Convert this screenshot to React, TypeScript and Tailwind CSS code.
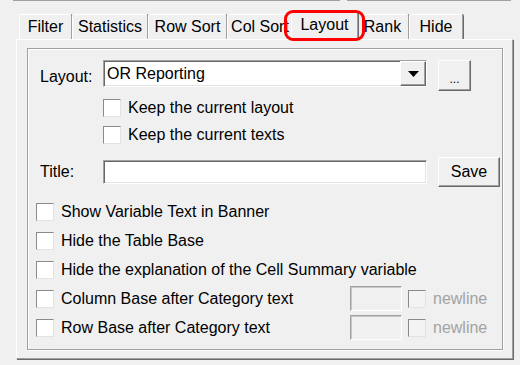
const raised =
  'border border-t-white border-l-white border-r-[#696969] border-b-[#696969] shadow-[inset_-1px_-1px_0_#a0a0a0] bg-[#f0f0f0]';
const sunken =
  'border border-t-[#a0a0a0] border-l-[#a0a0a0] border-r-white border-b-white shadow-[inset_1px_1px_0_#696969,inset_-1px_-1px_0_#e3e3e3]';

function Check({ disabled = false }: { disabled?: boolean }) {
  return (
    <span
      className={
        'block w-[18px] h-[18px] shrink-0 border border-t-[#8a8a8a] border-l-[#8a8a8a] border-r-[#e3e3e3] border-b-[#e3e3e3] ' +
        (disabled ? 'bg-[#f3f3f3]' : 'bg-white')
      }
    />
  );
}

function Tab({ label, width, selected = false }: { label: string; width: string; selected?: boolean }) {
  return (
    <div
      className={
        'flex justify-center bg-[#f0f0f0] rounded-t-[2px] border-l border-t border-white border-r border-r-[#a0a0a0] shadow-[1px_0_0_#696969] ' +
        width +
        (selected ? ' relative z-10 h-[28px] -mx-[2px] pt-[3px]' : ' h-[26px] pt-[3px]')
      }
    >
      <span className="leading-[18px]">{label}</span>
    </div>
  );
}

function OptionRow({ label }: { label: string }) {
  return (
    <div className="flex items-center h-[29px] pl-[8px]">
      <Check />
      <span className="ml-[7px] leading-[18px]">{label}</span>
    </div>
  );
}

function BaseRow({ label }: { label: string }) {
  return (
    <div className="flex items-center h-[29px] pl-[8px]">
      <Check />
      <span className="ml-[7px] w-[289px] leading-[18px]">{label}</span>
      <span className="block w-[52px] h-[25px] bg-[#f0f0f0] border border-t-[#a0a0a0] border-l-[#a0a0a0] border-r-white border-b-white shadow-[inset_1px_1px_0_#c8c8c8]" />
      <span className="ml-[6px]">
        <Check disabled />
      </span>
      <span className="ml-[7px] leading-[18px] text-[#a3a3a3]">newline</span>
    </div>
  );
}

export default function App() {
  return (
    <div className="relative w-[520px] h-[365px] overflow-hidden bg-[#f0f0f0] text-black text-[16px] font-['Liberation_Sans',Arial,sans-serif]">
      {/* bottom edges of the boxes above */}
      <div className="flex h-[1px]">
        <div className="ml-[13px] w-[327px] bg-[#a0a0a0]" />
        <div className="ml-[7px] w-[164px] bg-[#a0a0a0]" />
      </div>

      {/* tabs */}
      <div className="flex items-end mt-[11px] h-[28px] pl-[19px]">
        <Tab label="Filter" width="w-[53px]" />
        <Tab label="Statistics" width="w-[76px]" />
        <Tab label="Row Sort" width="w-[79px]" />
        <Tab label="Col Sort" width="w-[66px]" />
        <Tab label="Layout" width="w-[67px]" selected />
        <Tab label="Rank" width="w-[53px]" />
        <Tab label="Hide" width="w-[54px]" />
      </div>

      {/* tab panel */}
      <div className="relative -mt-[1px] ml-[16px] w-[497px] h-[320px] border-l border-t border-white border-r border-b border-r-[#a0a0a0] border-b-[#a0a0a0] shadow-[1px_1px_0_#696969]">
        <div className="ml-[10px] mt-[8px] w-[476px] h-[302px] border border-[#a0a0a0] shadow-[inset_1px_1px_0_#fff,1px_1px_0_#fff]">
          <div className="flex items-start mt-[11px] pl-[12px]">
            <span className="w-[63px] mt-[8px] leading-[18px]">Layout:</span>
            <div className={'flex w-[324px] h-[27px] bg-white ' + sunken}>
              <span className="flex-1 pl-[3px] pt-[4px] leading-[18px]">OR Reporting</span>
              <span className={'flex items-center justify-center w-[26px] h-full ' + raised}>
                <svg width="11" height="6" viewBox="0 0 11 6">
                  <polygon points="0,0 11,0 5.5,6" fill="#000" />
                </svg>
              </span>
            </div>
            <button className={'ml-[11px] w-[33px] h-[31px] text-[12px] leading-none pt-[6px] ' + raised}>...</button>
          </div>

          <div className="flex items-center mt-[8px] pl-[75px]">
            <Check />
            <span className="ml-[7px] leading-[18px]">Keep the current layout</span>
          </div>
          <div className="flex items-center mt-[9px] pl-[75px]">
            <Check />
            <span className="ml-[7px] leading-[18px]">Keep the current texts</span>
          </div>

          <div className="flex items-center mt-[13px] h-[30px] pl-[12px]">
            <span className="w-[63px] leading-[18px]">Title:</span>
            <span className={'block w-[324px] h-[24px] bg-white ' + sunken} />
            <button className={'ml-[11px] w-[62px] h-[30px] leading-[18px] ' + raised}>Save</button>
          </div>

          <div className="mt-[10px]">
            <OptionRow label="Show Variable Text in Banner" />
            <OptionRow label="Hide the Table Base" />
            <OptionRow label="Hide the explanation of the Cell Summary variable" />
            <BaseRow label="Column Base after Category text" />
            <BaseRow label="Row Base after Category text" />
          </div>
        </div>
      </div>

      {/* highlight around selected tab */}
      <div className="absolute left-[284px] top-[10px] w-[81px] h-[31px] border-[3px] border-[#ff0000] rounded-[9px] pointer-events-none z-20" />
    </div>
  );
}
